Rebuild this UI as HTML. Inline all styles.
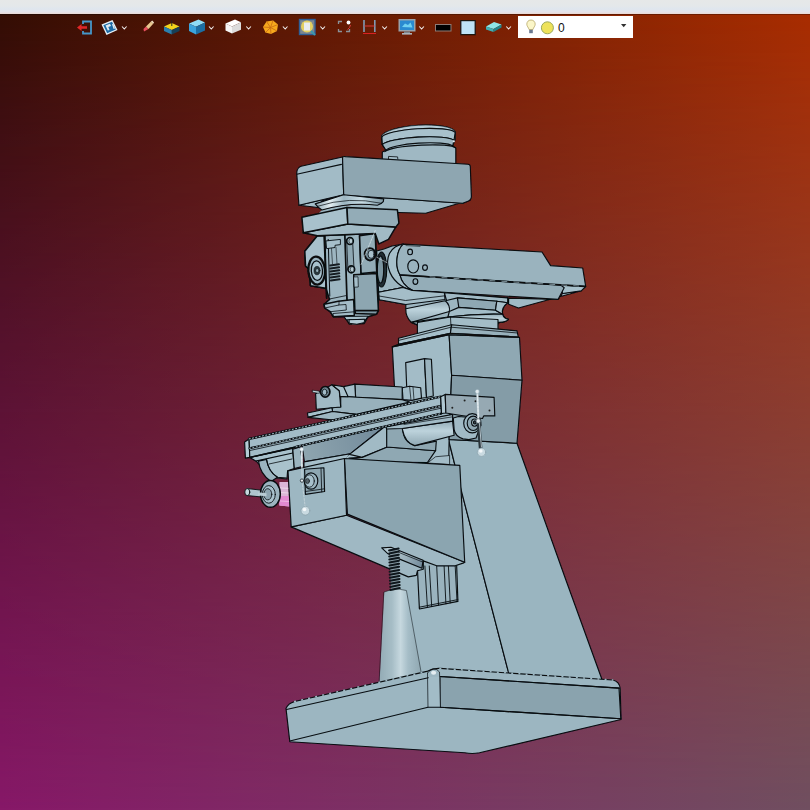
<!DOCTYPE html>
<html><head><meta charset="utf-8">
<style>
html,body{margin:0;padding:0;width:810px;height:810px;overflow:hidden;background:#5d1233;font-family:"Liberation Sans",sans-serif;}
#bgB{position:absolute;left:0;top:0;width:810px;height:810px;background:linear-gradient(to right,#871868,#704f60);}
#bgT{position:absolute;left:0;top:0;width:810px;height:810px;background:linear-gradient(to right,#330d03,#a82c00);
 -webkit-mask-image:linear-gradient(to bottom,#000 14px,transparent 810px);mask-image:linear-gradient(to bottom,#000 14px,transparent 810px);}
#top{position:absolute;left:0;top:0;width:810px;height:14px;background:linear-gradient(to bottom,#e6e8e8 0,#e4e8ea 6px,#dfe6ee 9px,#e6e4ea 12px,#ead8d4 14px);}
#topsh{position:absolute;left:0;top:14px;width:810px;height:1px;background:rgba(0,0,0,0.28);}
#combo{position:absolute;left:518px;top:16px;width:115px;height:22px;background:#fff;}
#combo span{position:absolute;left:40px;top:5px;font-size:12px;line-height:14px;color:#111;}
svg{position:absolute;left:0;top:0;}
</style></head><body>
<div id="bgB"></div><div id="bgT"></div>
<div id="top"></div><div id="topsh"></div>
<div id="combo"><span>0</span></div>
<svg id="tb" width="810" height="50" viewBox="0 0 810 50">
<defs><filter id="sb" x="-10%" y="-10%" width="120%" height="120%"><feGaussianBlur stdDeviation="0.35"/></filter></defs>
<g filter="url(#sb)">
<!-- 1 exit -->
<path d="M83 24V21.5H91V33.5H83V31" fill="none" stroke="#4596c8" stroke-width="1.8"/>
<path d="M77 27.5L81.5 24V26.2H87V28.8H81.5V31Z" fill="#e02828"/>
<!-- 2 blueprint -->
<path d="M101.5 24.5L112.5 20L117.5 30L106.5 35Z" fill="#e8f0f6"/>
<path d="M103.3 25.2L112 21.7L115.8 29.5L107.2 33.3Z" fill="#1b6aa5"/>
<path d="M105.5 25.5L110 23.7L111 26L108.3 27L109.5 30L107.8 30.6Z" fill="#dfeaf2"/>
<path d="M112 24.3L113.2 23.8L115 28.6L113.6 29.1Z" fill="#dfeaf2"/>
<!-- 3 pencil -->
<path d="M144 31.5L143.5 29L146 26.5L148.5 29Z" fill="#e85060"/>
<path d="M146 26.5L151 21.5L153.2 23.8L148.5 29Z" fill="#e8c890"/>
<path d="M151 21.5L152.2 20.6L154 22.6L153.2 23.8Z" fill="#f4e6c8"/>
<!-- 4 yellow box -->
<path d="M164 26.5L171.8 23L179.5 26.5L171.8 30Z" fill="#f2d31e"/>
<path d="M164 26.5L171.8 30V34.5L164 31Z" fill="#2b7fae"/>
<path d="M171.8 30L179.5 26.5V31L171.8 34.5Z" fill="#173f58"/>
<path d="M171.8 20.5V26" stroke="#222" stroke-width="1"/>
<!-- 5 blue cube -->
<path d="M189 23.5L198.5 19.5L205 22.5L196 26.8Z" fill="#8fdcf6"/>
<path d="M189 23.5L196 26.8V34.5L189 31Z" fill="#3aa3dc"/>
<path d="M196 26.8L205 22.5V30.5L196 34.5Z" fill="#1b6ea3"/>
<!-- 6 white cube -->
<path d="M225.5 23.5L235 19.5L241 22.3L232 26.5Z" fill="#ffffff"/>
<path d="M225.5 23.5L232 26.5V33.5L225.5 30.5Z" fill="#f6f6f6"/>
<path d="M232 26.5L241 22.3V29.8L232 33.5Z" fill="#dcdcdc"/>
<!-- 7 orange poly -->
<path d="M263 27L266.5 21.5L273 20.5L278 24.5L277 31L271 34L265.5 32.5Z" fill="#f7a81f"/>
<path d="M270.5 27.5L266.5 21.5M270.5 27.5L273 20.5M270.5 27.5L278 24.5M270.5 27.5L277 31M270.5 27.5L271 34M270.5 27.5L265.5 32.5M270.5 27.5L263 27" stroke="#c76a12" stroke-width="0.8" fill="none"/>
<!-- 8 magnifier -->
<rect x="299.5" y="19.5" width="15.5" height="15" fill="#7d8790" stroke="#2f5f98" stroke-width="1.4"/>
<circle cx="307" cy="26.5" r="6" fill="#e3cf62"/>
<rect x="304" y="22.5" width="6" height="8" fill="#e9edf0"/>
<path d="M311 31L315 35" stroke="#3a9ab0" stroke-width="1.8"/>
<!-- 9 dashed box -->
<path d="M338.5 24V21.5H342M338.5 29V31.5H342M346 31.5H349.5V29" fill="none" stroke="#8a929a" stroke-width="1.3"/>
<circle cx="348.5" cy="22.5" r="1.9" fill="#fff"/>
<path d="M347.5 29.5Q350 28 350.5 25" fill="none" stroke="#d83a3a" stroke-width="1"/>
<!-- 10 H -->
<path d="M364 20V32M374.8 20V32" stroke="#7f9ab5" stroke-width="1.6"/>
<path d="M364.5 26H374.5" stroke="#d83a3a" stroke-width="1"/>
<path d="M363 33.5H376" stroke="#d82020" stroke-width="1"/>
<!-- 11 monitor -->
<rect x="398.5" y="19" width="17" height="12.5" fill="#98a2ab"/>
<rect x="400" y="20.5" width="14" height="9.5" fill="#2a8ad0"/>
<path d="M402 27L405 23.5L408 25L410.5 22.5L412.5 27.5Z" fill="#6fd0f0"/>
<rect x="404" y="31.5" width="6" height="2" fill="#7c858d"/><rect x="402" y="33" width="10" height="1.6" fill="#aab2b9"/>
<!-- 12 black rect -->
<rect x="435.5" y="24.5" width="15.5" height="6.5" fill="#050505" stroke="#8e7a74" stroke-width="1"/>
<!-- 13 light blue square -->
<rect x="460.8" y="20.6" width="14.4" height="14" fill="#bfe3f6" stroke="#1a1210" stroke-width="1.2"/>
<!-- 14 teal slab -->
<path d="M486 26.5L494 22L501.5 24.5L493.5 29Z" fill="#8fe6e6"/>
<path d="M486 26.5L493.5 29V32L486 29.5Z" fill="#3fb0b4"/>
<path d="M493.5 29L501.5 24.5V27.5L493.5 32Z" fill="#23868c"/>
<!-- chevrons -->
<g fill="none" stroke="#f2eeee" stroke-width="1.1">
<path d="M122 26.5L124.3 29L126.6 26.5"/><path d="M209 26.5L211.3 29L213.6 26.5"/><path d="M246.3 26.5L248.6 29L250.9 26.5"/>
<path d="M282.9 26.5L285.2 29L287.5 26.5"/><path d="M320.4 26.5L322.7 29L325 26.5"/><path d="M382.3 26.5L384.6 29L386.9 26.5"/>
<path d="M419.3 26.5L421.6 29L423.9 26.5"/><path d="M506.3 26.5L508.6 29L510.9 26.5"/>
</g>
<!-- combo contents -->
<path d="M531 20C528.3 20 526.8 22 526.8 24.2C526.8 26.3 528.6 27.5 529 29.5H533C533.4 27.5 535.2 26.3 535.2 24.2C535.2 22 533.7 20 531 20Z" fill="#fbf6c8" stroke="#b8a86a" stroke-width="0.8"/>
<rect x="529.2" y="29.8" width="3.6" height="3.4" fill="#6a7890"/>
<circle cx="547.4" cy="27.8" r="6" fill="#eee25a" stroke="#9aa85a" stroke-width="1"/>
<path d="M621 24H626.4L623.7 27.2Z" fill="#333"/>
</g>

</svg>
<svg id="model" width="810" height="810" viewBox="0 0 810 810">
<defs>
<linearGradient id="gCone" x1="0" x2="1" y1="0" y2="0"><stop offset="0" stop-color="#93abb5"/><stop offset="0.3" stop-color="#a6bdc6"/><stop offset="0.5" stop-color="#c6d8df"/><stop offset="0.68" stop-color="#a5bdc7"/><stop offset="1" stop-color="#8ea6b0"/></linearGradient>
<linearGradient id="gCol" x1="0" x2="1" y1="0" y2="0"><stop offset="0" stop-color="#8ea6b1"/><stop offset="0.3" stop-color="#c6dbe3"/><stop offset="0.6" stop-color="#9db6c1"/><stop offset="1" stop-color="#8ca4af"/></linearGradient>
<linearGradient id="gRoll" x1="0" x2="0" y1="0" y2="1"><stop offset="0" stop-color="#93abb6"/><stop offset="0.4" stop-color="#bdd3dc"/><stop offset="1" stop-color="#8fa7b2"/></linearGradient>
<linearGradient id="gCol2" x1="0" x2="1" y1="0" y2="0"><stop offset="0" stop-color="#8ea6b1"/><stop offset="0.22" stop-color="#e2edf1"/><stop offset="0.42" stop-color="#9db6c1"/><stop offset="0.68" stop-color="#c9dde5"/><stop offset="0.85" stop-color="#9bb4bf"/><stop offset="1" stop-color="#8098a3"/></linearGradient>
<linearGradient id="gUnder" gradientUnits="userSpaceOnUse" x1="304" y1="455" x2="386" y2="430"><stop offset="0" stop-color="#8ea5af"/><stop offset="1" stop-color="#71899a"/></linearGradient>
<linearGradient id="gSlot" gradientUnits="userSpaceOnUse" x1="385" y1="550" x2="423" y2="565"><stop offset="0" stop-color="#b4c9d2"/><stop offset="0.5" stop-color="#9fb4be"/><stop offset="1" stop-color="#71899a"/></linearGradient>
<filter id="mb" x="-5%" y="-5%" width="110%" height="110%"><feGaussianBlur stdDeviation="0.4"/></filter>
</defs>
<g filter="url(#mb)" stroke="#070d11" stroke-width="1.15" stroke-linejoin="round" stroke-linecap="round">

<!-- ===== PULLEY ===== -->
<g id="pulley">
<path d="M381.7 136 A37 9.5 -3.5 0 1 455.2 131.7 L455.2 139.5 L452.7 145.9 L455.8 148 L455.8 168 L382.3 168 L382.3 152 L386 150.2 L382.3 144.6 Z" fill="#9fb8c3"/>
<path d="M381.7 136 A37 9.5 -3.5 0 1 455.2 131.7 L455.2 132.5 A37 7 -3.5 0 0 381.9 137.2 Z" fill="#b4cbd5" stroke-width="0.6"/>
<path d="M381.9 137.2 A37 7 -3.5 0 1 455.2 132.5 L454 140.3 A36.5 6.5 -3.5 0 0 382.3 144.6 Z" fill="#a8c1cc"/>
<path d="M382.3 144.6 A36.5 6.5 -3.5 0 1 454 140.3 L452.7 145.9 A34 6 -3.5 0 0 386 150.2 Z" fill="#9cb5c0"/>
<path d="M384.8 151.6 A36 5.5 -3.5 0 1 455.4 147.9" fill="none"/>
<path d="M388.5 158.6 L388.5 156.4 L397.6 156.9 L397.8 159" fill="#a6bfca" stroke-width="0.8"/>
<circle cx="453.8" cy="141.3" r="1.1" fill="#e8f0f4" stroke="none"/>
</g>

<!-- ===== MOTOR BOX ===== -->
<g id="motor">
<path d="M298.9 205.2 L318 207.5 L322 201 L343.7 194.7 Z" fill="#a6bfca"/>
<path d="M344.7 195.2 L462.7 203.3 L470.3 200 L425.7 213.2 L398.5 212.5 L378 212 L372 198 Z" fill="#9db6c1"/>
<path d="M296.8 174.3 L296.8 171.9 Q297.5 167.5 301.1 166.3 L342.5 157 L343.7 194.7 L298.9 205.2 Z" fill="#a2bbc6"/>
<path d="M296.8 174.3 L341.4 164.4" fill="none"/>
<path d="M342.5 157 Q343.5 156.2 345.5 156.6 L468 164.2 Q470.2 164.4 470.3 166.5 L471.4 196.5 Q471.3 200 468 201.2 L462.7 203.3 L344.7 195.2 L343.7 194.7 Z" fill="#8ea6b1"/>
</g>

<!-- ===== COLLAR ===== -->
<g id="collar">
<path d="M321.9 210 Q349 203 377.4 205 L380 210.5 L347 209 L316 216 Z" fill="#9bb4bf" stroke="none"/>
<path d="M315.2 203.9 L343.7 194.7 L383.7 198.9 L383.3 201.7 Q381 204.5 377.4 205.2 Q349 202 321.9 210 Q318 207.5 315.2 203.9 Z" fill="url(#gCol2)"/>
<path d="M317.5 206.3 Q349 196 381.5 203.3" fill="none" stroke-width="0.7"/>
</g>

<!-- ===== RAM ===== -->
<g id="ram">
<!-- bearing between head and ram -->
<path d="M376.7 251 L384 249 L392 246 L403.3 244.1 L412 290 L403 287.5 L378.6 292.3 Z" fill="#9db6c1"/>
<ellipse cx="381.5" cy="269.5" rx="5.2" ry="17.5" fill="#222d33"/>
<ellipse cx="380.5" cy="269.5" rx="3.2" ry="13.5" fill="#7c95a0"/>
<!-- bottom faces -->
<path d="M508.6 298.1 L558 299.4 L562.5 293.5 L581.5 290.7 L518.5 308 L508.6 304.3 Z" fill="#a0bac5"/>
<path d="M560.7 285 L585.7 286.5 L581.5 290.7 L562.5 293.5 Z" fill="#a6c0cb"/>
<path d="M400 275 L560.7 285 L564.2 287.8 L558 299.4 L412.3 290.2 C406 287 401 281 400 275 Z" fill="#94adb8"/>
<!-- side face -->
<path d="M403.3 244.1 C390 246 385.5 258 388.5 268 C391.5 280 402 288.5 412.3 290.2 C406 287 401 281 400 275 C394.5 266 396.5 250 403.3 244.1 Z" fill="#a6bfca"/>
<path d="M403.3 244.1 L542 252 L550.6 265.6 L582.7 268 L585.7 286.5 L400 274.9 C394.5 266 396.5 250 403.3 244.1 Z" fill="#9ab3be"/>
<path d="M400 275 L585 286.4" fill="none" stroke-width="1.7"/>
<path d="M430 276.9 L585 286.4" fill="none" stroke="#a9c0ca" stroke-width="0.7" stroke-dasharray="5 7"/>
<ellipse cx="410.1" cy="251.9" rx="2.4" ry="2.8" fill="#9ab3be"/>
<ellipse cx="413.2" cy="266.4" rx="5.4" ry="6.6" fill="#9ab3be"/>
<ellipse cx="425" cy="267.6" rx="2.4" ry="2.8" fill="#9ab3be"/>
<ellipse cx="415.4" cy="281.5" rx="2.4" ry="2.8" fill="#94adb8"/>
<path d="M406 245.6 L420 246.4" fill="none" stroke-width="0.6"/>
</g>

<!-- ===== TURRET ===== -->
<g id="turret">
<path d="M378.6 292.3 L403 287.5 L412.3 290.4 L444.4 292.7 L507.7 297.9 L507.7 302.8 Q501 308 502.6 314.2 Q504 318.5 508.5 319.3 Q506 322 499.6 322.4 L498.2 323.8 L450.7 321 L418 325.1 L411.3 322.4 L405.8 308.8 L405.8 304.5 L379.3 299.7 Z" fill="#9cb5c0"/>
<path d="M378.6 292.3 L403 287.5 L412.3 290.4 L444.4 292.7 L445 299.5 L405.8 304.5 L379.3 299.7 Z" fill="#a4bdc8"/>
<path d="M379 296 L405.5 300.5 L444.8 295.8" fill="none" stroke-width="0.8"/>
<path d="M444.4 292.7 L507.7 297.9 L507.7 302.8 L496.8 301.2 L457.4 297.9 L446.5 300.5 Z" fill="#a1bac5"/>
<path d="M457.4 297.9 L496.8 301.2 L495.5 310.2 L458.8 307.4 Z" fill="#8fa8b3"/>
<path d="M405.8 308.8 L445.2 300.7 Q450.5 305 449.3 311.5 L411.3 322.4 Q405.5 317 405.8 308.8 Z" fill="url(#gRoll)"/>
<path d="M449.3 311.5 L458.8 307.4 L495.5 310.2 L502.6 314.2 Q476 313.5 447.9 317 Z" fill="#a3bcc7"/>
<path d="M447.9 317 Q476 313.5 502.6 314.2 Q504 318.5 508.5 319.3 Q506 322 499.6 322.4 L450.7 321 L418 325.1 L411.3 322.4 Z" fill="url(#gRoll)"/>
<path d="M496.8 301.2 L507.7 302.8 Q501 308 502.6 314.2 L495.5 310.2 Z" fill="#a6bfca"/>
</g>

<!-- ===== COLUMN ===== -->
<g id="column">
<!-- lower faces -->
<path d="M398 575.8 L448.6 440 L461 489.4 L507.9 670.1 L509 676 L433 674 L402 674 Z" fill="#9db7c2" stroke="none"/><path d="M448.6 440 L461 489.4 L507.9 670.1" fill="none"/>
<path d="M449.1 439.5 L517 443.2 L565.9 580 L601.7 678.8 L603 684 L509 676 L507.9 670.1 L461 489.4 L448.6 440 Z" fill="#9ab5c0"/>
<!-- left/front upper face -->
<path d="M392.3 346.9 L449.1 334.6 L451.6 375.3 L449.1 439.5 L448.6 470 L399 470 Z" fill="#a1bbc6"/>
<!-- right faces -->
<path d="M449.1 334.6 L519.5 337.5 L522 380.2 L451.6 375.3 Z" fill="#8fa8b3"/>
<path d="M451.6 375.3 L522 380.2 L517 443.2 L449.1 439.5 Z" fill="#849ca7"/>
<!-- cap -->
<path d="M417.4 322.4 L450.7 317 L498 319.5 L498 331 L450.7 327 L417.4 336 Z" fill="#a3bcc7"/><path d="M450.5 317 L450.9 325" fill="none" stroke-width="0.8"/>
<path d="M398.5 338.3 L451.6 324.7 L450.4 333.3 L398.5 344.4 Z" fill="#a6bfca"/>
<path d="M451.6 324.7 L517 330.9 L518.3 337 L450.4 333.3 Z" fill="#98b1bc"/>
<path d="M398.5 344.4 L450.4 333.3 L518.3 337 L519.5 337.5 L449.1 334.6 L392.3 346.9 Z" fill="#a3bcc7"/>
<path d="M398.6 340.4 L451.2 327.2 L517.6 333" fill="none" stroke-width="0.8"/>
</g>

<!-- ===== L BRACKET on column ===== -->
<g id="lbracket">
<path d="M405.7 362.6 L424.5 358.6 L426.5 397.5 L407.2 400 Z" fill="#a3bcc7"/>
<path d="M424.5 358.6 L431.4 359.3 L433.3 396 L426.5 397.5 Z" fill="#9ab3be"/>
</g>
<!-- ===== VISE ===== -->
<g id="vise">
<path d="M402.2 387.8 L409.6 386.3 L420.7 387.8 L421.5 398.1 L411.9 400.4 L403 399.6 Z" fill="#a3bcc7"/>
<path d="M409.6 386.3 L411 400.4 M413 387 L414 399.8" fill="none" stroke-width="0.7"/>
<path d="M354.8 384.1 L402.2 387 L402.2 399.6 L355.6 397.4 Z" fill="#93acb7"/>
<path d="M343.5 386.6 L354.8 384.1 L355.6 397.4 L344 396 Z" fill="#a6bfca"/>
<path d="M340.7 396.5 L348.1 396.7 L402.2 399.6 L409.6 402 L356.3 414.4 L332.6 411.5 L331.9 407.8 L340.7 407 Z" fill="#98b1bc"/>
<path d="M315.6 393.7 L331.9 384.8 L339.3 390.7 L340.7 407 L316.3 409.3 Z" fill="#a1bac5"/>
<path d="M331.9 384.8 L343.5 386.6 L348.1 396.7 L340 396.4 L339.3 390.7 Z" fill="#a8c1cc"/>
<path d="M307.4 413 L331.9 407.8 L332.6 411.5 L308.1 417.4 Z" fill="#a6bfca"/>
<path d="M308.1 417.4 L332.6 411.5 L356.3 414.4 L335.6 420.2 Z" fill="#9db6c1"/>
<path d="M312.6 390.2 L319.3 391.2 L319.3 393.4 L312.6 392.2 Z" fill="#c0d4dc" stroke-width="0.6"/>
<ellipse cx="325.2" cy="391.8" rx="4.7" ry="5.3" fill="#6f8690" stroke-width="1.7"/>
<ellipse cx="324.6" cy="392.2" rx="2.4" ry="3" fill="#a3bcc7" stroke-width="0.8"/>
</g>
<!-- ===== TABLE + SADDLE ===== -->
<g id="table">
<!-- left under-table trough / bracket -->
<path d="M255.7 460.5 L292.8 452 L294.3 468.5 L287.6 470.7 L287 479 L277 478 Q268 474 262 468 Z" fill="#a9c2cc"/>
<path d="M258.5 461.1 L266.5 459.5 Q268.5 472 277.5 477.2 L271 481.5 Q260 474 258.5 461.1 Z" fill="#9bb4bf"/>
<path d="M266.5 459.5 Q268.5 472 277.5 477.2 L286.5 478" fill="none"/>
<path d="M269 464 L292 459" fill="none" stroke-width="0.8"/>
<path d="M249.8 457.4 L292.8 448.5 L292.8 453 L255.7 461.1 Z" fill="#a8c1cc"/>
<!-- pink -->
<path d="M279.4 482 L288.3 482 L289.3 506.5 L279.4 505.5 Z" fill="#dcb6d6" stroke="none"/>
<path d="M279.4 496 L288.9 496 L289.3 506.5 L279.4 505.5 Z" fill="#e38ad0" stroke="none"/>
<path d="M280.5 488 L289 488.3 M280.5 492.5 L289 493" stroke="#ecd6e8" stroke-width="1.2" fill="none"/>
<path d="M280.5 501 L289.3 501.5" stroke="#f0b8e2" stroke-width="1" fill="none"/>
<!-- table underside dark -->
<path d="M302 444.5 L386.5 425 L350.4 453.7 L304.4 461.9 Z" fill="url(#gUnder)"/>
<path d="M352.5 454.2 L386.5 427.8" fill="none" stroke-width="0.9"/>
<path d="M303.9 461.9 L350.4 453.7 L346 458.8 L304 469 Z" fill="#a6bfca"/>
<path d="M344 459.5 L350.4 453.7 L362.2 457.4 L352 460 Z" fill="#a6bfca" stroke="none"/>
<!-- saddle pieces -->
<path d="M349.5 454.4 L386.5 425.3 L387.4 447 L362.2 457.4 Z" fill="#a1bac5"/>
<path d="M348.9 458.1 L362.2 457.4 L387.4 447 L435.6 450.7 L427.4 462.6 L380 462 Z" fill="#8fa8b3"/>
<path d="M436 456.7 L449.6 455.5 L449.6 464.5 L428 463 Z" fill="#a3bcc7" stroke-width="0.7"/>
<path d="M386.7 427 L402.2 427.8 L403.7 435.2 Q406 443 414.8 445.6 L436.3 441.1 L435.6 450.7 L386.7 447 Z" fill="#8ea7b2"/>
<path d="M402.2 428.5 L452.6 421.1 L454.1 435.2 L414.8 445.6 Q405 443 402.2 428.5 Z" fill="url(#gRoll)"/>
<path d="M385.9 427 L452.6 414.4 L452.6 421.1 L402.2 428.5 L386.7 429 Z" fill="#a1bac5"/>
<path d="M404 424.5 L452.6 416.8" fill="none" stroke-width="0.7"/>
<!-- small bracket left with handle -->
<path d="M292.8 449.3 L300.2 447 L303.1 466.3 L294.3 468.5 Z" fill="#9bb4bf"/>
<!-- table side face -->
<path d="M244.6 441.9 L249.1 438.9 L249.8 457.4 L245.4 458.1 Z" fill="#b4cbd5"/>
<path d="M249.1 438.9 L440.7 396.7 L441.5 413.5 L249.8 457.4 Z" fill="#a3bcc7"/>
<path d="M249.5 448.3 L441 405.9" fill="none" stroke-width="2.1"/>
<path d="M249.5 448.3 L441 405.9" fill="none" stroke="#a9c0ca" stroke-width="0.9" stroke-dasharray="1.1 2.3"/>
<path d="M249.6 450.6 L441.1 408.2" fill="none" stroke-width="0.8"/>
<path d="M249.1 438.9 L440.7 396.7" fill="none" stroke-width="2.4"/>
<path d="M249.1 438.9 L440.7 396.7" fill="none" stroke="#a9c0ca" stroke-width="1" stroke-dasharray="1.1 2.3"/>
<path d="M249.8 457.4 L441.5 413.5" fill="none" stroke-width="1.5"/>
<path d="M296 446.8 L441.5 413.5" fill="none" stroke-width="2.2"/>
<path d="M296 446.8 L441.5 413.5" fill="none" stroke="#a9c0ca" stroke-width="0.9" stroke-dasharray="1.1 2.3"/>
<!-- right end bracket -->
<path d="M440.7 396.7 L445.2 394.4 L445.9 413 L441.5 413.5 Z" fill="#b0c8d2"/>
<path d="M453.3 418 L458.5 416.5 L470 417.5 L481 425 L476 438 L468.9 439.6 L463 438.9 Q455 436 454.1 429.3 Z" fill="#a1bac5"/>
<path d="M445.2 394.4 L494.1 397.4 L494.8 415.9 L483.7 415.9 L482.5 418.5 L458 415 L445.9 413 Z" fill="#96a9b3"/>
<g fill="#222" stroke="none"><circle cx="464.6" cy="400.6" r="1"/><circle cx="475.5" cy="401.3" r="1"/><circle cx="452.3" cy="407.8" r="1"/><circle cx="489.5" cy="410.6" r="1"/></g>
<ellipse cx="472.3" cy="423.3" rx="8.6" ry="9.6" fill="#9db6c1"/>
<ellipse cx="473.2" cy="423.3" rx="6" ry="7.2" fill="#8fa7b2"/>
<ellipse cx="474.6" cy="422.6" rx="3" ry="3.6" fill="#a8c1cc"/>
<ellipse cx="474.8" cy="422.4" rx="1.3" ry="1.6" fill="#445058"/>
</g>

<!-- ===== KNEE ===== -->
<g id="knee">
<!-- dovetail ways -->
<path d="M416.9 558 L456.4 558 L457.9 601.4 L419.4 609 Z" fill="#9ab3be"/>
<path d="M424.9 566 L427.4 607.4 M429.3 566 L431.7 606.6 M436.7 566 L438.5 605.2 M444.1 566 L445.9 603.8 M448.4 566 L450.2 602.9 M455.2 566 L457 601.6" fill="none" stroke-width="0.9"/>
<path d="M419.3 607.2 L457.8 599.6" fill="none" stroke-width="0.9"/>
<!-- bottom face -->
<path d="M291.2 526.9 L346.5 515.3 L464.7 562.2 L463.8 562.9 L455.2 565.8 L436.7 565.8 L423.3 560.9 L423.3 569.3 L417.5 570.7 L416.3 575.4 L408.3 576.9 Z" fill="#9fb8c3"/>
<!-- slot in bottom -->
<path d="M381.7 547.9 L391 547.3 L423.1 560.2 L421.9 568.3 L397.8 558.4 L388 553.8 Z" fill="url(#gSlot)"/>
<path d="M397.8 552 L422.6 562" fill="none" stroke-width="0.7"/>
<!-- side face -->
<path d="M344.4 458.5 L459.8 465.4 L464.7 562.2 L347.4 514.1 Z" fill="#8ba5b0"/>
<!-- front face -->
<path d="M288 470.9 L344.4 458.5 L346.5 515.3 L291.2 526.9 Z" fill="#9db7c2"/>
</g>

<!-- ===== CONE + SPRING ===== -->
<g id="cone">
<path d="M384.2 592 Q395 587.5 406.4 590.5 L421.8 676 L379.3 686 Z" fill="url(#gCone)" stroke-width="0.5"/>
<path d="M389.6 549 L398.4 549 L399.8 590 L391 590 Z" fill="#8a9ea8" stroke="none"/>
<path d="M389.0 550.4 L398.6 548.6 M389.1 553.4 L398.7 551.6 M389.2 556.5 L398.8 554.7 M389.3 559.5 L398.9 557.7 M389.4 562.6 L399.0 560.8 M389.5 565.6 L399.1 563.8 M389.5 568.6 L399.1 566.8 M389.6 571.7 L399.2 569.9 M389.7 574.7 L399.3 572.9 M389.8 577.7 L399.4 575.9 M389.9 580.8 L399.5 579.0 M390.0 583.8 L399.6 582.0 M390.1 586.9 L399.7 585.1 M390.2 589.9 L399.8 588.1" fill="none" stroke-width="2" stroke="#10171b"/>
</g>
<!-- ===== BASE ===== -->
<g id="base">
<path d="M286 708.4 Q288 703.5 294.7 701.5 L426.8 671.4 Q433 668 440 668.4 L612.8 680 Q619.5 681.5 620.2 688.6 L621 719.5 L479.5 752.8 Q472 754.2 464.7 752.8 L289.8 741.7 Z" fill="#9cb6c1"/>
<path d="M440.4 676.5 L619 688.1 L620.8 718.8 L440.4 707.2 Z" fill="#8aa3ae"/>
<path d="M428 677 L440.4 676.5 L440.4 707.2 L428 707.2 Z" fill="#a2bcc7" stroke="none"/>
<path d="M286.5 709.5 L428.3 677.8 M440.4 676.5 L619.5 688.1 M289.8 741 L428 707.2 L440.4 707.2 L620.8 718.8" fill="none"/>
<path d="M294.7 701.5 L426.8 671.4 M440 668.4 L612.8 680" fill="none" stroke="#9cb6c1" stroke-width="1.5" stroke-dasharray="0.7 6.5"/>
<ellipse cx="433.6" cy="672.8" rx="2.6" ry="2" fill="#e4edf1" stroke="none"/>
<path d="M427.5 673 L428 707.2 M440.4 707.2 L439.5 672 Q434 665 427.5 673" fill="none" stroke-width="0.7"/>
</g>

<!-- ===== HANDWHEEL LEFT ===== -->
<g id="hwheel">
<path d="M247.5 488.6 L268 490.9 L268 497.6 L247.5 495.6 Z" fill="#aec4cd" stroke-width="0.9"/>
<ellipse cx="247.3" cy="492.1" rx="2.5" ry="3.5" fill="#c6d8df" stroke-width="0.9"/>
<ellipse cx="270.4" cy="493.9" rx="9.9" ry="13.4" fill="#9bb4bf" stroke-width="1.5"/>
<ellipse cx="268.8" cy="494.4" rx="6.5" ry="8.8" fill="#a8c1cc" stroke-width="0.9"/>
<ellipse cx="267.8" cy="494.3" rx="4" ry="5.6" fill="#8da5b0" stroke-width="0.8"/>
<path d="M258 492.3 L266.5 493.2 L266.5 496.2 L258 495.6 Z" fill="#b8ccd4" stroke="none"/>
</g>
<!-- ===== bearing on knee ===== -->
<g id="kbearing">
<path d="M304.6 469.3 L323.9 467.8 L324.6 491.5 L305.4 494.4 Z" fill="#8ea7b2"/>
<path d="M321 468.1 L321.7 491.9 M305.3 491.5 L324.5 488.8" fill="none" stroke-width="0.8"/>
<ellipse cx="311" cy="481" rx="6.8" ry="8.2" fill="#9bb4bf"/>
<ellipse cx="309.5" cy="481" rx="4.8" ry="6.2" fill="#a8c1cc" stroke-width="0.8"/>
<ellipse cx="307.5" cy="481" rx="2" ry="2.6" fill="#56636a" stroke-width="0.6"/>
</g>
<!-- ===== crank handles ===== -->
<g id="cranks">
<path d="M301.7 449.3 L301.9 466.5" stroke="#c6d4da" stroke-width="1.9" fill="none"/><path d="M301.7 449.3 L301.9 466.5" stroke="#e6eef2" stroke-width="1.1" fill="none" stroke-dasharray="2.2 1.4"/><path d="M301.9 466.5 L302.1 479" stroke="#cfdde3" stroke-width="0.8" fill="none"/>
<path d="M302 481.1 L305.2 507" stroke="#c8d6dc" stroke-width="0.8" stroke-dasharray="2 1.5" fill="none"/>
<circle cx="301.7" cy="449.3" r="2" fill="#eef4f7" stroke="#8ea7b2" stroke-width="0.5"/>
<circle cx="302" cy="480.6" r="1.7" fill="#e6eef2" stroke="#2c373d" stroke-width="0.9"/>
<circle cx="305.4" cy="510.7" r="4.4" fill="#c9dae1" stroke="#8aa0aa" stroke-width="0.7"/>
<circle cx="304.5" cy="509.5" r="1.8" fill="#f4f8fa" stroke="none"/>
<path d="M477.3 391.5 L478.5 421" stroke="#c3d1d7" stroke-width="2.1" fill="none"/><path d="M477.3 391.5 L478.5 421" stroke="#e6eef2" stroke-width="1.2" fill="none" stroke-dasharray="2.2 1.4"/>
<path d="M478.4 421 L480.6 448" stroke="#2a353b" stroke-width="3.6" fill="none"/>
<path d="M479.5 423 L481.4 447" stroke="#c4d3da" stroke-width="0.9" fill="none"/>
<circle cx="477.3" cy="391.5" r="2.1" fill="#e2ebef" stroke="#8ea7b2" stroke-width="0.5"/>
<circle cx="478.3" cy="421" r="2.3" fill="#e6eef2" stroke="#55626a" stroke-width="0.7"/>
<circle cx="481.5" cy="452.2" r="4.2" fill="#c9dae1" stroke="#8aa0aa" stroke-width="0.7"/>
<circle cx="480.8" cy="451" r="1.8" fill="#f4f8fa" stroke="none"/>
</g>

<!-- ===== HEAD ===== -->
<g id="head" stroke-width="1.5">
<!-- body silhouette -->
<path d="M317.4 235.7 L304.8 251.3 L305.6 266.1 L309.3 269.1 L310.5 285.8 L325.9 288.3 L329.6 299.4 L324.1 304.3 L324.7 308 L330.2 311.7 L333.3 316.7 L344.4 316.7 L349.4 324.1 L364.2 323.5 L367.9 316.7 L376.5 314.2 L378.4 310.5 L376.7 272 L375.2 233.5 Z" fill="#9db6c1"/>
<path d="M317.4 235.7 L304.8 251.3 L305.6 266.1 L309.3 269.1 L310.5 285.8 L325.9 288.3 L325 236 Z" fill="#a8c1cc"/>
<!-- handwheel -->
<ellipse cx="316.7" cy="270.6" rx="8.4" ry="14" fill="#9bb4bf" stroke-width="2.3" transform="rotate(-4 316.7 270.6)"/>
<ellipse cx="316.9" cy="270.6" rx="5.6" ry="9.8" fill="#a8c1cc" stroke-width="1.3" transform="rotate(-4 316.7 270.6)"/>
<ellipse cx="317" cy="270.6" rx="3" ry="4.2" fill="#2c373d" stroke-width="0.6"/><ellipse cx="317.2" cy="270.4" rx="1.1" ry="1.5" fill="#9bb4bf" stroke="none"/>
<!-- panels -->
<path d="M324.2 236 L326.7 298" fill="none" stroke-width="1.8"/><path d="M328.2 239.4 L329.8 296" fill="none" stroke-width="1"/>
<path d="M326.3 240.9 L340.4 239.4 L340.4 244.6 L335 245.3 L335 247.5 L327 248.6 Z" fill="#a6bfca" stroke-width="0.9"/>
<path d="M331.5 248.5 L332.5 264 M336 247.5 L337 264" fill="none" stroke-width="0.6"/>
<path d="M330.2 265.5 L339 264.3 M330.3 268.5 L339.1 267.3 M330.4 271.5 L339.2 270.3 M330.5 274.5 L339.3 273.3 M330.6 277.5 L339.4 276.3 M330.8 280.5 L339.6 279.3" fill="none" stroke-width="1.9" stroke="#141c20"/>
<path d="M344.8 233.5 L347 300 M359.6 235.7 L361.1 273.5" fill="none" stroke-width="1.7"/>
<path d="M347 239 L352.5 238.5 L354 269 L348.3 270 Z" fill="#8fa8b3" stroke-width="0.8"/>
<ellipse cx="350" cy="241" rx="3.3" ry="3.5" fill="#a6bfca" stroke-width="1.7"/><ellipse cx="350.9" cy="241" rx="2" ry="2.6" fill="#b8ccd4" stroke-width="0.6"/>
<ellipse cx="351.3" cy="269.3" rx="3.3" ry="3.5" fill="#a6bfca" stroke-width="1.7"/><ellipse cx="352.2" cy="269.3" rx="2" ry="2.6" fill="#b8ccd4" stroke-width="0.6"/>
<path d="M359.6 235.7 L375.2 233.5 L376.7 272 L361.1 273.5 Z" fill="#93acb7"/>
<ellipse cx="370" cy="254.3" rx="5.3" ry="6.2" fill="#748c97" stroke-width="1.9"/>
<ellipse cx="371" cy="254.3" rx="3" ry="4" fill="#a8c1cc" stroke-width="0.8"/>
<!-- quill block -->
<path d="M354.9 310.5 L378.4 310.5 L376.5 314.2 L355.6 313.6 Z" fill="#8099a4"/>
<path d="M353.7 274.7 L376.5 273.5 L378.4 310.5 L354.9 310.5 Z" fill="#8da6b1"/>
<path d="M354 277 L358 276.8 L358.3 287 L354.4 287.2 Z" fill="#a6bfca" stroke-width="0.7"/>
<!-- lower left flange -->
<path d="M324.1 304.3 L338.3 301.2 L353.7 299.4 L354.3 315.4 L333.3 316.7 L330.2 311.7 L324.7 308 Z" fill="#a3bcc7"/>
<path d="M329.5 299 L346.5 295.5 L347 299.8 M324.7 308 L339 305 L339 301.2 M339 305 L346 304.5 L346.3 310 L330.2 311.7 M333.3 316.7 L333 313.5 L354 311.8" fill="none" stroke-width="0.8"/>
<!-- spindle nose -->
<path d="M344.4 316.4 L367.9 316.2 L366 319.3 L346.5 319.8 Z" fill="#a6bfca" stroke-width="1"/>
<path d="M349.4 319.7 L364.6 319.3 L364.2 322.6 Q357 325.5 349.6 323.4 Z" fill="#b4cbd5" stroke-width="1"/>
<!-- head block on top -->
<path d="M303.3 232.8 L347.8 223.9 L395.9 226.9 L388.5 239.4 L378.9 243.9 L375.2 233.5 L317.4 235.7 Z" fill="#a1bac5"/>
<path d="M301.9 217.2 L347 207.6 L347.8 223.9 L303.3 232.8 Z" fill="#a8c1cc"/>
<path d="M347 207.6 L397.4 209.8 L398.9 223.1 L395.9 226.9 L347.8 223.9 Z" fill="#93acb7"/>
<!-- white tess marks -->
<path d="M375.2 230.6 L368 248 L361.1 264.6 M376.7 257.2 L387.8 263.1" fill="none" stroke="#e8f0f4" stroke-width="0.6" stroke-dasharray="2 1.2"/>
</g>


</g>

</svg>
</body></html>
